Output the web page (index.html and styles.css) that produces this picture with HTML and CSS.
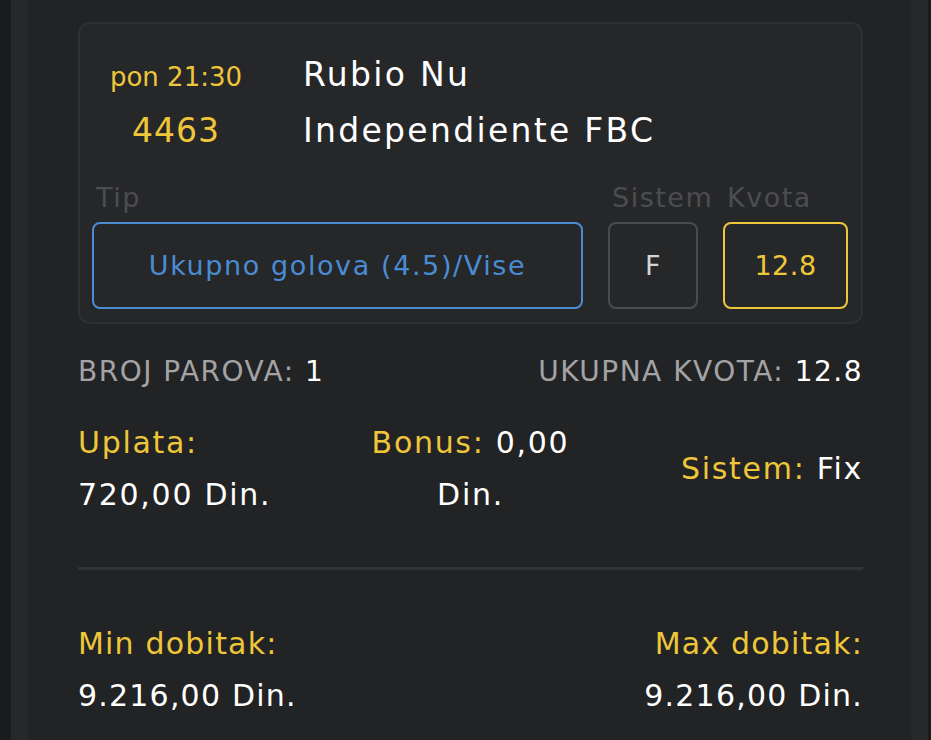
FILE: index.html
```html
<!DOCTYPE html>
<html>
<head>
<meta charset="utf-8">
<link rel="stylesheet" href="styles.css">
</head>
<body>
<div class="frame">
  <div class="main">
    <div class="card">
      <div class="match">
        <div class="time">pon 21:30</div>
        <div class="team">Rubio Nu</div>
        <div class="code">4463</div>
        <div class="team">Independiente FBC</div>
      </div>
      <div class="pick">
        <div class="field field-tip">
          <div class="label">Tip</div>
          <div class="box box-tip">Ukupno golova (4.5)/Vise</div>
        </div>
        <div class="field field-sys">
          <div class="label">Sistem</div>
          <div class="box box-sys">F</div>
        </div>
        <div class="field field-odd">
          <div class="label">Kvota</div>
          <div class="box box-odd">12.8</div>
        </div>
      </div>
    </div>

    <div class="totals">
      <div><span class="muted">BROJ PAROVA:</span> <span class="white">1</span></div>
      <div><span class="muted">UKUPNA KVOTA:</span> <span class="white">12.8</span></div>
    </div>

    <div class="stake">
      <div class="stake-left">
        <div class="yellow">Uplata:</div>
        <div class="white">720,00 Din.</div>
      </div>
      <div class="stake-mid">
        <div><span class="yellow">Bonus:</span> <span class="white">0,00</span></div>
        <div class="white">Din.</div>
      </div>
      <div class="stake-right">
        <span class="yellow">Sistem:</span> <span class="white">Fix</span>
      </div>
    </div>

    <div class="divider"></div>

    <div class="wins">
      <div class="win">
        <div class="yellow">Min dobitak:</div>
        <div class="white">9.216,00 Din.</div>
      </div>
      <div class="win win-right">
        <div class="yellow">Max dobitak:</div>
        <div class="white">9.216,00 Din.</div>
      </div>
    </div>
  </div>
</div>
</body>
</html>
```

FILE: styles.css
```css
html, body {
  margin: 0;
  padding: 0;
  background: #1a1b1d;
  height: 100%;
}
body {
  font-family: "DejaVu Sans", "Open Sans", sans-serif;
  color: #ffffff;
  overflow: hidden;
}
.frame {
  margin-left: 11px;
  width: 917px;
  height: 740px;
  background: #26282a;
  padding: 0 17px;
  box-sizing: border-box;
}
.main {
  background: #222325;
  height: 100%;
  padding: 22px 48px 0 50px;
  box-sizing: border-box;
}
.card {
  background: #262729;
  border: 2px solid #2e3032;
  border-radius: 12px;
  padding: 0 13px 13px 12px;
}
.match {
  display: grid;
  grid-template-columns: 168px 1fr;
  column-gap: 43px;
  align-items: baseline;
  padding-top: 24px;
}
.time {
  color: #eec63a;
  font-size: 26px;
  line-height: 54px;
  text-align: center;
}
.code {
  color: #eec63a;
  font-size: 33px;
  line-height: 54px;
  text-align: center;
  letter-spacing: 1px;
}
.team {
  font-size: 33px;
  line-height: 54px;
  color: #ffffff;
  letter-spacing: 2.3px;
}
.pick {
  display: flex;
  gap: 25px;
  margin-top: 20px;
}
.field {
  display: flex;
  flex-direction: column;
}
.field-tip { flex: 1; }
.field-sys { width: 90px; }
.field-odd { width: 125px; }
.label {
  color: #4c4d50;
  font-size: 27px;
  line-height: 40px;
  padding-left: 4px;
  white-space: nowrap;
  letter-spacing: 1.5px;
}
.box {
  height: 87px;
  box-sizing: border-box;
  border: 2px solid #4a4b4e;
  border-radius: 8px;
  display: flex;
  align-items: center;
  justify-content: center;
  font-size: 27px;
  margin-top: 4px;
  letter-spacing: 0.5px;
}
.box-tip {
  border-color: #4a8cd3;
  color: #4a8cd3;
  letter-spacing: 1.6px;
}
.box-sys {
  color: #d4d4d4;
}
.box-odd {
  border-color: #eec63a;
  color: #eec63a;
}
.totals {
  display: flex;
  justify-content: space-between;
  font-size: 28px;
  line-height: 40px;
  margin-top: 28px;
  letter-spacing: 1.5px;
}
.muted {
  color: #a3a3a5;
}
.white { color: #ffffff; }
.yellow { color: #eec63a; }
.stake {
  display: grid;
  grid-template-columns: 1fr 1fr 1fr;
  align-items: center;
  font-size: 30px;
  line-height: 52px;
  margin-top: 25px;
  letter-spacing: 1.7px;
}
.stake-mid { text-align: center; }
.stake-right { text-align: right; }
.divider {
  height: 3px;
  background: #323335;
  margin-top: 46px;
}
.wins {
  display: flex;
  justify-content: space-between;
  font-size: 30px;
  line-height: 52px;
  margin-top: 48px;
  letter-spacing: 1.2px;
}
.win-right { text-align: right; }
```
